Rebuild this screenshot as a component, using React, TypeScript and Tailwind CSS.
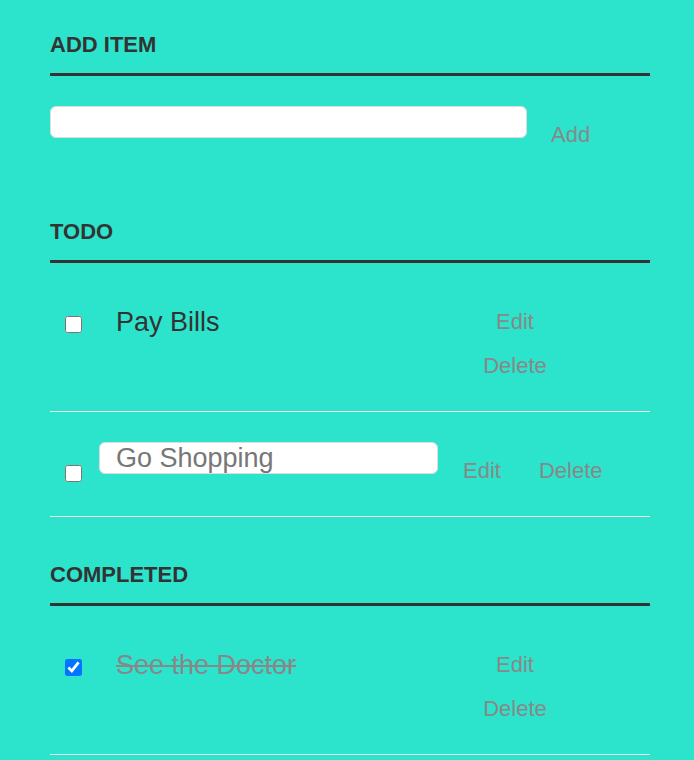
import { useState } from "react";

type Task = { id: number; text: string; done: boolean };

export default function App() {
  const [tasks, setTasks] = useState<Task[]>([
    { id: 1, text: "Pay Bills", done: false },
    { id: 2, text: "Go Shopping", done: false },
    { id: 3, text: "See the Doctor", done: true },
  ]);
  const [editing] = useState<number | null>(2);

  function toggle(id: number) {
    setTasks((prev) => prev.map((t) => (t.id === id ? { ...t, done: !t.done } : t)));
  }

  const todo = tasks.filter((t) => !t.done);
  const completed = tasks.filter((t) => t.done);

  return (
    <main className="min-h-[760px] bg-[#2ce4cc] [font-family:'Liberation_Sans',Arial,sans-serif]">
      <div className="ml-[50px] w-[600px] pt-[32px]">
        <Heading>Add item</Heading>
        <div className="flex items-start pt-[30px] pb-[62px]">
          <input
            type="text"
            className="h-[32px] w-[477px] rounded-[6px] border border-[#ddd] bg-white px-4 text-[22px] outline-none"
          />
          <button className="ml-[24px] mt-[7px] text-[22px] leading-[44px] text-[#888]">
            Add
          </button>
        </div>

        <Heading>Todo</Heading>
        <ul>
          {todo.map((t) => (
            <Row key={t.id} task={t} editing={editing === t.id} onToggle={() => toggle(t.id)} />
          ))}
        </ul>

        <div className="pt-[45px]">
          <Heading>Completed</Heading>
        </div>
        <ul>
          {completed.map((t) => (
            <Row key={t.id} task={t} editing={editing === t.id} onToggle={() => toggle(t.id)} />
          ))}
        </ul>
      </div>
    </main>
  );
}

function Heading({ children }: { children: React.ReactNode }) {
  return (
    <h2 className="border-b-[3px] border-[#333] pb-[15px] text-[22px] font-bold uppercase leading-[26px] text-[#333]">
      {children}
    </h2>
  );
}

function Row({
  task,
  editing,
  onToggle,
}: {
  task: Task;
  editing: boolean;
  onToggle: () => void;
}) {
  if (editing) {
    return (
      <li className="flex items-start border-b border-[#eee] pt-[30px] pb-[23px]">
        <input
          type="checkbox"
          checked={task.done}
          onChange={onToggle}
          className="ml-[15px] mt-[23px] h-[17px] w-[17px]"
        />
        <input
          type="text"
          defaultValue={task.text}
          className="ml-[17px] h-[32px] w-[339px] rounded-[6px] border border-[#ddd] bg-white pl-4 text-[27px] leading-[30px] text-[#777] outline-none"
        />
        <button className="ml-[25px] mt-[7px] text-[22px] leading-[44px] text-[#888]">Edit</button>
        <button className="ml-[38px] mt-[7px] text-[22px] leading-[44px] text-[#888]">Delete</button>
      </li>
    );
  }

  return (
    <li className="flex items-start border-b border-[#eee] pt-[37px] pb-[23px]">
      <input
        type="checkbox"
        checked={task.done}
        onChange={onToggle}
        className="ml-[15px] mt-[16px] h-[17px] w-[17px]"
      />
      <label
        className={
          "ml-[34px] text-[27px] leading-[44px] " +
          (task.done ? "text-[#888] line-through" : "text-[#333]")
        }
      >
        {task.text}
      </label>
      <div className="ml-auto mr-[70px] flex w-[130px] flex-col items-center">
        <button className="text-[22px] leading-[44px] text-[#888]">Edit</button>
        <button className="text-[22px] leading-[44px] text-[#888]">Delete</button>
      </div>
    </li>
  );
}
